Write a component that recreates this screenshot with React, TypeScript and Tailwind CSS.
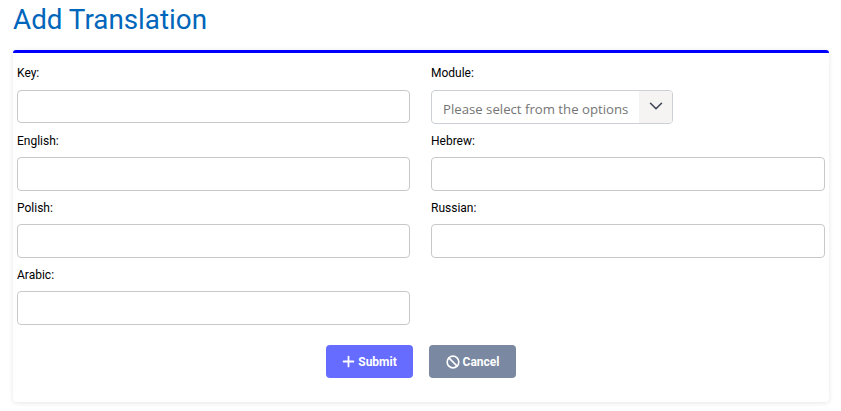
import { Ban, ChevronDown, Plus } from 'lucide-react'

function Field({ label }: { label: string }) {
  return (
    <div>
      <label className="block h-5 mb-[6.5px] text-xs font-normal leading-5 text-black">{label}</label>
      <input className="block w-full h-[33.5px] bg-white border border-[#c8c8c8] rounded" />
    </div>
  )
}

export default function App() {
  return (
    <div className="w-[841px] h-[411px] bg-white overflow-hidden font-['Roboto',sans-serif]">
      <div className="pl-[13px] pr-3">
        <h1 className="h-[50px] pt-[3px] text-[27.8px] leading-[34px] font-normal text-[#0066bb]">Add Translation</h1>
        <div className="h-[352px] border-t-[3px] border-[#0000ff] rounded-t-[3px] rounded-b bg-white shadow-[0_1px_5px_rgba(0,0,0,0.1)] px-1 pt-[10.1px]">
          <div className="grid grid-cols-[393px_394px] gap-x-[21px] gap-y-[7px]">
            <Field label="Key:" />
            <div>
              <label className="block h-5 mb-[7px] text-xs font-normal leading-5 text-black">Module:</label>
              <div className="flex w-[242px] h-[33.5px] border border-[#ccd0d6] rounded-[4px] overflow-hidden">
                <div className="flex-1 pl-[11px] font-['Open_Sans',sans-serif] text-[13.2px] leading-[36px] text-[#757575] whitespace-nowrap">
                  Please select from the options
                </div>
                <div className="w-[33px] flex items-center justify-center bg-[#f5f4f2] text-[#3f4a59]">
                  <ChevronDown size={22} strokeWidth={1.75} className="-mt-0.5" />
                </div>
              </div>
            </div>
            <Field label="English:" />
            <Field label="Hebrew:" />
            <Field label="Polish:" />
            <Field label="Russian:" />
            <Field label="Arabic:" />
          </div>
          <div className="flex justify-center gap-4 mt-[20.9px]">
            <button className="w-[87px] h-[33px] flex items-center justify-center gap-[1px] pr-[2px] rounded bg-[#666cff] text-white text-xs font-bold">
              <Plus size={17} strokeWidth={2.5} />
              Submit
            </button>
            <button className="w-[87px] h-[33px] flex items-center justify-center gap-[3px] rounded bg-[#7a88a1] text-white text-xs font-bold">
              <Ban size={14} strokeWidth={2.75} />
              Cancel
            </button>
          </div>
        </div>
      </div>
    </div>
  )
}
